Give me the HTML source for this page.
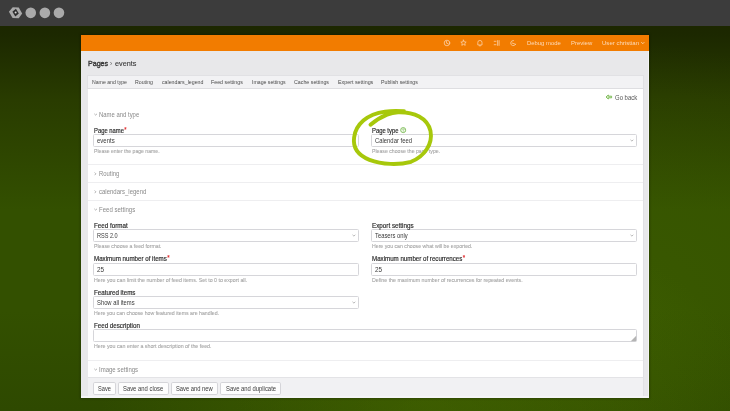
<!DOCTYPE html>
<html><head><meta charset="utf-8"><style>
*{box-sizing:border-box;margin:0;padding:0}
html,body{width:730px;height:411px;overflow:hidden;background:#2a3d00}
#root{position:absolute;left:-6px;top:-6px;width:742px;height:423px;overflow:hidden;will-change:transform;font-family:"Liberation Sans",sans-serif}
#bg{position:absolute;left:0;top:0;width:742px;height:423px;background:radial-gradient(ellipse 330px 200px at 436px 417px,rgba(90,130,0,0.28) 0%,rgba(90,130,0,0.14) 60%,rgba(90,130,0,0) 100%),radial-gradient(ellipse 400px 260px at 606px 306px,rgba(80,120,0,0.22) 0%,rgba(80,120,0,0.10) 60%,rgba(80,120,0,0) 100%),linear-gradient(180deg,#1c2700 32px,#1c2800 40px,#293c00 106px,#335000 216px,#335000 316px,#2e4900 417px,#2e4900 423px)}
#c{position:absolute;left:6px;top:6px;width:730px;height:411px}
.a{position:absolute;white-space:nowrap;line-height:normal;transform-origin:0 0}
.t{-webkit-text-stroke:0.1px currentColor}
.hl{color:#fddcbc}
.tab{color:#4a4a4a}
.sh{color:#8a8a8a}
.lbl{color:#2b2b2b;-webkit-text-stroke:0.17px #2b2b2b}
.req{color:#e0282a;-webkit-text-stroke:0.15px #e0282a;position:relative;top:-0.12em;margin-left:0.5px}
.val{color:#3a3a3a}
.help{color:#a6a6a6}
.box{position:absolute}
.inp{position:absolute;border:1px solid #d6d6da;border-radius:1.5px;background:#fff}
.btn{position:absolute;border:1px solid #d5d5d9;border-radius:1.8px;background:#fdfdfd}
.btxt{color:#3a3a3a}
</style></head><body><div id="root"><div id="bg"></div><div id="c">
<div class="box" style="left:-6px;top:-6px;width:742px;height:32px;background:#3c3c3c"></div>
<svg class="a" style="left:0;top:0" width="70" height="26" viewBox="0 0 70 26">
<polygon points="8.9,11.8 12.7,7.2 18.8,7.5 22.2,13.5 18.7,18.3 12.6,18" fill="#a9a9a9"/>
<polygon points="12.4,11.8 15.9,8.7 18.8,13.4 15.3,16.6" fill="#2e2e2e"/>
<circle cx="15.6" cy="12.6" r="1.0" fill="#d8d8d8"/>
<g fill="#aaaaaa"><circle cx="30.75" cy="12.85" r="5.3"/><circle cx="44.85" cy="12.85" r="5.3"/><circle cx="58.95" cy="12.85" r="5.3"/></g></svg>
<div class="box" style="left:81px;top:35px;width:568px;height:362.5px;box-shadow:0 0 2px 1px rgba(0,0,0,0.22)"></div>
<div class="box" style="left:81px;top:35px;width:568px;height:362.5px;background:#e8e8ea"></div>
<div class="box" style="left:81px;top:35px;width:568px;height:16px;background:#f27c00"></div>
<svg class="a" style="left:440px;top:37px" width="80" height="12" viewBox="0 0 80 12">
<g fill="none" stroke="#fcd6b0" stroke-width="0.75" stroke-linecap="round" stroke-linejoin="round">
<circle cx="7" cy="6" r="2.8"/><path d="M6.6 4.3 V6.2 L8.3 6.9"/>
<path d="M23.5 3.1 L24.3 4.9 L26.2 5.1 L24.8 6.4 L25.2 8.3 L23.5 7.3 L21.8 8.3 L22.2 6.4 L20.8 5.1 L22.7 4.9 Z"/>
<path d="M37.8 7.6 V5.5 A2.1 2.1 0 0 1 42 5.5 V7.6 Z M39.3 8.8 H40.5"/>
<path d="M54.2 4.3 H56 M54.2 7.7 H56 M57.6 3.6 V8.4 M59.1 3.6 V8.4"/>
<path d="M73.5 3.5 A2.6 2.6 0 1 0 75.6 7.3 M72 6 L75.6 7.3"/>
</g></svg>
<svg class="a" style="left:640px;top:40px" width="6" height="6" viewBox="0 0 6 6"><path d="M1.3 2.2 L2.8 3.7 L4.3 2.2" fill="none" stroke="#fde3c8" stroke-width="0.8"/></svg>
<div class="box" style="left:87px;top:75px;width:557px;height:14px;background:#f2f2f4;border:1px solid #e1e1e4;border-bottom:1px solid #dedee1"></div>
<div class="box" style="left:87.5px;top:88.5px;width:1px;height:288.5px;background:#dcdce0"></div>
<div class="box" style="left:643px;top:88.5px;width:1px;height:288.5px;background:#e0e0e4"></div>
<div class="box" style="left:88px;top:88.7px;width:555px;height:288.3px;background:#fff"></div>
<svg class="a" style="left:605px;top:94px" width="8" height="6" viewBox="0 0 8 6"><path d="M1 3 L3.3 1 V2.2 H6.6 V3.8 H3.3 V5 Z" fill="#e8f4dc" stroke="#72b648" stroke-width="0.9" stroke-linejoin="round"/></svg>
<svg class="a" style="left:94.0px;top:113.2px" width="4" height="3" viewBox="0 0 4 3"><path d="M0.3 0.8 L1.65 2.1 L3.0 0.8" fill="none" stroke="#8e8e8e" stroke-width="0.65"/></svg>
<div class="inp" style="left:93px;top:134px;width:266px;height:13px"></div>
<div class="inp" style="left:371px;top:134px;width:266px;height:13px"></div>
<svg class="a" style="left:629.7px;top:139px" width="4" height="3" viewBox="0 0 4 3"><path d="M0.5 0.8 L1.9 2.1 L3.3 0.8" fill="none" stroke="#8a8a8a" stroke-width="0.6"/></svg>
<svg class="a" style="left:400.4px;top:127.4px" width="6.4" height="6.4" viewBox="0 0 6.4 6.4"><circle cx="3.2" cy="3.1" r="2.55" fill="#f3f9ee" stroke="#6fb545" stroke-width="0.8"/><path d="M2.35 2.5 C2.35 1.6, 4.05 1.6, 4.05 2.5 C4.05 3.1, 3.2 3.1, 3.2 3.75" fill="none" stroke="#6fb545" stroke-width="0.65"/><circle cx="3.2" cy="4.5" r="0.38" fill="#6fb545"/></svg>
<div class="box" style="left:88px;top:164px;width:555px;height:1px;background:#eeeef0"></div>
<svg class="a" style="left:94.0px;top:172.3px" width="3" height="4" viewBox="0 0 3 4"><path d="M0.6 0.5 L1.9 1.85 L0.6 3.2" fill="none" stroke="#8e8e8e" stroke-width="0.65"/></svg>
<div class="box" style="left:88px;top:182px;width:555px;height:1px;background:#eeeef0"></div>
<svg class="a" style="left:94.0px;top:190.3px" width="3" height="4" viewBox="0 0 3 4"><path d="M0.6 0.5 L1.9 1.85 L0.6 3.2" fill="none" stroke="#8e8e8e" stroke-width="0.65"/></svg>
<div class="box" style="left:88px;top:200px;width:555px;height:1px;background:#eeeef0"></div>
<svg class="a" style="left:94.0px;top:208.2px" width="4" height="3" viewBox="0 0 4 3"><path d="M0.3 0.8 L1.65 2.1 L3.0 0.8" fill="none" stroke="#8e8e8e" stroke-width="0.65"/></svg>
<div class="inp" style="left:93px;top:229px;width:266px;height:13px"></div>
<svg class="a" style="left:351.7px;top:234px" width="4" height="3" viewBox="0 0 4 3"><path d="M0.5 0.8 L1.9 2.1 L3.3 0.8" fill="none" stroke="#8a8a8a" stroke-width="0.6"/></svg>
<div class="inp" style="left:371px;top:229px;width:266px;height:13px"></div>
<svg class="a" style="left:629.7px;top:234px" width="4" height="3" viewBox="0 0 4 3"><path d="M0.5 0.8 L1.9 2.1 L3.3 0.8" fill="none" stroke="#8a8a8a" stroke-width="0.6"/></svg>
<div class="inp" style="left:93px;top:263px;width:266px;height:13px"></div>
<div class="inp" style="left:371px;top:263px;width:266px;height:13px"></div>
<div class="inp" style="left:93px;top:296px;width:266px;height:13px"></div>
<svg class="a" style="left:351.7px;top:301px" width="4" height="3" viewBox="0 0 4 3"><path d="M0.5 0.8 L1.9 2.1 L3.3 0.8" fill="none" stroke="#8a8a8a" stroke-width="0.6"/></svg>
<div class="inp" style="left:93px;top:329px;width:544px;height:13px"></div>
<svg class="a" style="left:630px;top:335px" width="7" height="7" viewBox="0 0 7 7"><path d="M6.2 0.8 V6.2 H0.8 Z" fill="#b4b4b4"/></svg>
<div class="box" style="left:88px;top:359.5px;width:555px;height:1px;background:#eeeef0"></div>
<svg class="a" style="left:94.0px;top:367.7px" width="4" height="3" viewBox="0 0 4 3"><path d="M0.3 0.8 L1.65 2.1 L3.0 0.8" fill="none" stroke="#8e8e8e" stroke-width="0.65"/></svg>
<div class="box" style="left:88px;top:377px;width:555px;height:19.2px;background:#f1f1f3;border-top:1px solid #e3e3e6"></div>
<div class="box" style="left:81px;top:396px;width:568px;height:1.5px;background:#f5f5f7"></div>
<div class="box" style="left:648px;top:51px;width:1px;height:346.5px;background:#f3f3f5"></div>
<div class="box" style="left:643px;top:377px;width:1px;height:19px;background:#e2e2e5"></div>
<div class="btn" style="left:92.5px;top:381.5px;width:23.3px;height:13px"></div>
<div class="btn" style="left:118.3px;top:381.5px;width:50.3px;height:13px"></div>
<div class="btn" style="left:170.6px;top:381.5px;width:47.4px;height:13px"></div>
<div class="btn" style="left:220px;top:381.5px;width:61.4px;height:13px"></div>
<div class="a hl" style="left:527.00px;top:40px;font-size:6.0px;transform:scaleX(0.9809);">Debug mode</div>
<div class="a hl" style="left:570.80px;top:40px;font-size:6.0px;transform:scaleX(0.9934);">Preview</div>
<div class="a hl" style="left:602.00px;top:40px;font-size:6.0px;transform:scaleX(1.0088);">User christian</div>
<div class="a a" style="left:87.70px;top:59px;font-size:7.2px;transform:scaleX(0.9846);color:#363636;-webkit-text-stroke:0.35px #363636">Pages</div>
<div class="a a" style="left:110.20px;top:59px;font-size:7.2px;transform:scaleX(0.8759);color:#555">›</div>
<div class="a t" style="left:114.80px;top:59px;font-size:7.2px;transform:scaleX(1.0088);color:#363636">events</div>
<div class="a tab" style="left:91.80px;top:79px;font-size:5.8px;transform:scaleX(0.8898);">Name and type</div>
<div class="a tab" style="left:135.20px;top:79px;font-size:5.8px;transform:scaleX(0.9004);">Routing</div>
<div class="a tab" style="left:161.90px;top:79px;font-size:5.8px;transform:scaleX(0.9041);">calendars_legend</div>
<div class="a tab" style="left:211.40px;top:79px;font-size:5.8px;transform:scaleX(0.9133);">Feed settings</div>
<div class="a tab" style="left:252.00px;top:79px;font-size:5.8px;transform:scaleX(0.8934);">Image settings</div>
<div class="a tab" style="left:294.40px;top:79px;font-size:5.8px;transform:scaleX(0.9123);">Cache settings</div>
<div class="a tab" style="left:337.50px;top:79px;font-size:5.8px;transform:scaleX(0.9202);">Expert settings</div>
<div class="a tab" style="left:381.20px;top:79px;font-size:5.8px;transform:scaleX(0.9084);">Publish settings</div>
<div class="a " style="left:614.90px;top:94px;font-size:6.3px;transform:scaleX(0.9462);color:#555">Go back</div>
<div class="a sh" style="left:99.30px;top:111px;font-size:6.3px;transform:scaleX(0.9409);">Name and type</div>
<div class="a lbl" style="left:93.60px;top:127px;font-size:6.3px;transform:scaleX(0.9279);">Page name<span class="req">*</span></div>
<div class="a val" style="left:96.70px;top:137px;font-size:6.6px;transform:scaleX(0.9102);">events</div>
<div class="a t help" style="left:93.80px;top:148px;font-size:5.3px;transform:scaleX(0.9638);">Please enter the page name.</div>
<div class="a lbl" style="left:371.60px;top:127px;font-size:6.3px;transform:scaleX(0.9340);">Page type</div>
<div class="a val" style="left:374.70px;top:137px;font-size:6.6px;transform:scaleX(0.8924);">Calendar feed</div>
<div class="a t help" style="left:371.80px;top:148px;font-size:5.3px;transform:scaleX(0.9752);">Please choose the page type.</div>
<div class="a sh" style="left:99.30px;top:170px;font-size:6.3px;transform:scaleX(0.9349);">Routing</div>
<div class="a sh" style="left:99.30px;top:188px;font-size:6.3px;transform:scaleX(0.9530);">calendars_legend</div>
<div class="a sh" style="left:99.30px;top:206px;font-size:6.3px;transform:scaleX(0.9571);">Feed settings</div>
<div class="a lbl" style="left:93.60px;top:222px;font-size:6.3px;transform:scaleX(0.9952);">Feed format</div>
<div class="a val" style="left:96.70px;top:232px;font-size:6.6px;transform:scaleX(0.8422);">RSS 2.0</div>
<div class="a t help" style="left:93.80px;top:243px;font-size:5.3px;transform:scaleX(0.9805);">Please choose a feed format.</div>
<div class="a lbl" style="left:371.60px;top:222px;font-size:6.3px;transform:scaleX(0.9983);">Export settings</div>
<div class="a val" style="left:374.70px;top:232px;font-size:6.6px;transform:scaleX(0.8853);">Teasers only</div>
<div class="a t help" style="left:371.80px;top:243px;font-size:5.3px;transform:scaleX(0.9803);">Here you can choose what will be exported.</div>
<div class="a lbl" style="left:93.60px;top:255px;font-size:6.3px;transform:scaleX(0.9822);">Maximum number of items<span class="req">*</span></div>
<div class="a val" style="left:96.70px;top:266px;font-size:6.6px;transform:scaleX(0.9671);">25</div>
<div class="a t help" style="left:93.80px;top:277px;font-size:5.3px;transform:scaleX(0.9944);">Here you can limit the number of feed items. Set to 0 to export all.</div>
<div class="a lbl" style="left:371.60px;top:255px;font-size:6.3px;transform:scaleX(0.9780);">Maximum number of recurrences<span class="req">*</span></div>
<div class="a val" style="left:374.70px;top:266px;font-size:6.6px;transform:scaleX(0.9671);">25</div>
<div class="a t help" style="left:371.80px;top:277px;font-size:5.3px;transform:scaleX(0.9914);">Define the maximum number of recurrences for repeated events.</div>
<div class="a lbl" style="left:93.60px;top:289px;font-size:6.3px;transform:scaleX(0.9877);">Featured items</div>
<div class="a val" style="left:96.70px;top:299px;font-size:6.6px;transform:scaleX(0.8837);">Show all items</div>
<div class="a t help" style="left:93.80px;top:310px;font-size:5.3px;transform:scaleX(0.9829);">Here you can choose how featured items are handled.</div>
<div class="a lbl" style="left:93.60px;top:322px;font-size:6.3px;transform:scaleX(0.9855);">Feed description</div>
<div class="a t help" style="left:93.80px;top:343px;font-size:5.3px;transform:scaleX(0.9979);">Here you can enter a short description of the feed.</div>
<div class="a sh" style="left:99.30px;top:366px;font-size:6.3px;transform:scaleX(0.9543);">Image settings</div>
<div class="a btxt" style="left:97.70px;top:385px;font-size:6.6px;transform:scaleX(0.8575);">Save</div>
<div class="a btxt" style="left:123.35px;top:385px;font-size:6.6px;transform:scaleX(0.8908);">Save and close</div>
<div class="a btxt" style="left:175.90px;top:385px;font-size:6.6px;transform:scaleX(0.8797);">Save and new</div>
<div class="a btxt" style="left:225.65px;top:385px;font-size:6.6px;transform:scaleX(0.8924);">Save and duplicate</div>
<svg class="a" style="left:0;top:0" width="730" height="411" viewBox="0 0 730 411">
<path d="M370.5 124.8 C375.5 120.5, 381 117, 387 114.6 C391 113.1, 394 112.5, 398 112.3 C414 111.8, 427.5 118, 430.5 131 C433 144, 424.5 156.5, 411 161.8 C399 165.1, 382 164.7, 369.5 159.9 C357.5 155, 352.8 147, 354.1 137.5 C355.6 124.5, 367 114, 385 111.6 C392 110.7, 398 110.8, 404 111.3" fill="none" stroke="#a7c80b" stroke-width="3.9" stroke-linecap="round"/>
</svg>
</div></div></body></html>
